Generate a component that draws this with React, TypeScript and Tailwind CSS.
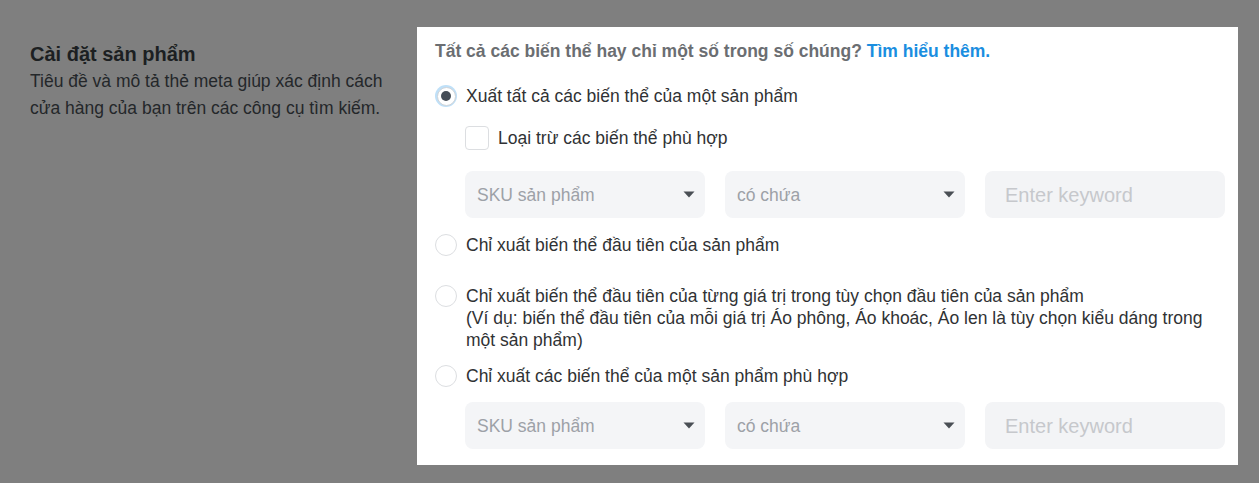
import React from "react";

const font = { fontFamily: '"Liberation Sans", Arial, sans-serif' };

function Caret() {
  return (
    <svg width="12" height="7" viewBox="0 0 12 7" className="shrink-0">
      <path d="M0.5 0.5 L11.5 0.5 L6 6.5 Z" fill="#4a4f55" />
    </svg>
  );
}

function SelectBox({ label }: { label: string }) {
  return (
    <div className="flex h-[47px] w-[240px] items-center justify-between rounded-[8px] bg-[#f4f5f7] pl-[12px] pr-[10px]">
      <span className="text-[17.5px] leading-[22px] text-[#9da1a7]">{label}</span>
      <Caret />
    </div>
  );
}

function FilterRow() {
  return (
    <div className="ml-[30px] flex gap-[20px]">
      <SelectBox label="SKU sản phẩm" />
      <SelectBox label="có chứa" />
      <div className="flex h-[47px] w-[240px] items-center rounded-[8px] bg-[#f3f4f6] pl-[20px]">
        <span className="text-[20px] leading-[22px] text-[#c6c8cc]">Enter keyword</span>
      </div>
    </div>
  );
}

function Radio({ checked }: { checked?: boolean }) {
  if (checked) {
    return (
      <div className="flex h-[22px] w-[22px] shrink-0 items-center justify-center rounded-full bg-[#bfe0f8]">
        <div className="flex h-[19px] w-[19px] items-center justify-center rounded-full border border-[#d0d4d8] bg-white">
          <div className="h-[10px] w-[10px] rounded-full bg-[#454d57]" />
        </div>
      </div>
    );
  }
  return <div className="h-[22px] w-[22px] shrink-0 rounded-full border border-[#dcdee1] bg-white" />;
}

export default function App() {
  return (
    <div className="flex h-[483px] w-[1259px] bg-[#7f7f7f] pl-[30px] pt-[27px]" style={font}>
      <div className="w-[387px] pt-[14px]">
        <div className="text-[20px] font-bold leading-[26px] text-[#1c1f22]">Cài đặt sản phẩm</div>
        <div className="mt-[1px] text-[17.5px] leading-[27px] text-[#24272a]">
          Tiêu đề và mô tả thẻ meta giúp xác định cách
          <br />
          cửa hàng của bạn trên các công cụ tìm kiếm.
        </div>
      </div>
      <div className="h-[438px] w-[821px] bg-white pl-[18px] pr-[13px] pt-[12px]">
        <div className="text-[17.5px] font-bold leading-[24px] text-[#6b6e72]">
          Tất cả các biến thể hay chỉ một số trong số chúng?{" "}
          <span className="text-[#1a8ee0]">Tìm hiểu thêm.</span>
        </div>

        <div className="mt-[22px] flex items-center gap-[9px]">
          <Radio checked />
          <span className="text-[17.5px] leading-[22px] text-[#303234]">Xuất tất cả các biến thể của một sản phẩm</span>
        </div>

        <div className="ml-[30px] mt-[19px] flex items-center gap-[9px]">
          <div className="h-[24px] w-[24px] shrink-0 rounded-[4px] border border-[#dcdee1] bg-white" />
          <span className="text-[17.5px] leading-[22px] text-[#303234]">Loại trừ các biến thể phù hợp</span>
        </div>

        <div className="mt-[21px]">
          <FilterRow />
        </div>

        <div className="mt-[16px] flex items-center gap-[9px]">
          <Radio />
          <span className="text-[17.5px] leading-[22px] text-[#303234]">Chỉ xuất biến thể đầu tiên của sản phẩm</span>
        </div>

        <div className="mt-[29px] flex items-start gap-[9px]">
          <Radio />
          <span className="text-[17.5px] leading-[22px] text-[#303234]">
            Chỉ xuất biến thể đầu tiên của từng giá trị trong tùy chọn đầu tiên của sản phẩm
            <br />
            (Ví dụ: biến thể đầu tiên của mỗi giá trị Áo phông, Áo khoác, Áo len là tùy chọn kiểu dáng trong
            <br />
            một sản phẩm)
          </span>
        </div>

        <div className="mt-[14px] flex items-center gap-[9px]">
          <Radio />
          <span className="text-[17.5px] leading-[22px] text-[#303234]">Chỉ xuất các biến thể của một sản phẩm phù hợp</span>
        </div>

        <div className="mt-[15px]">
          <FilterRow />
        </div>
      </div>
    </div>
  );
}
